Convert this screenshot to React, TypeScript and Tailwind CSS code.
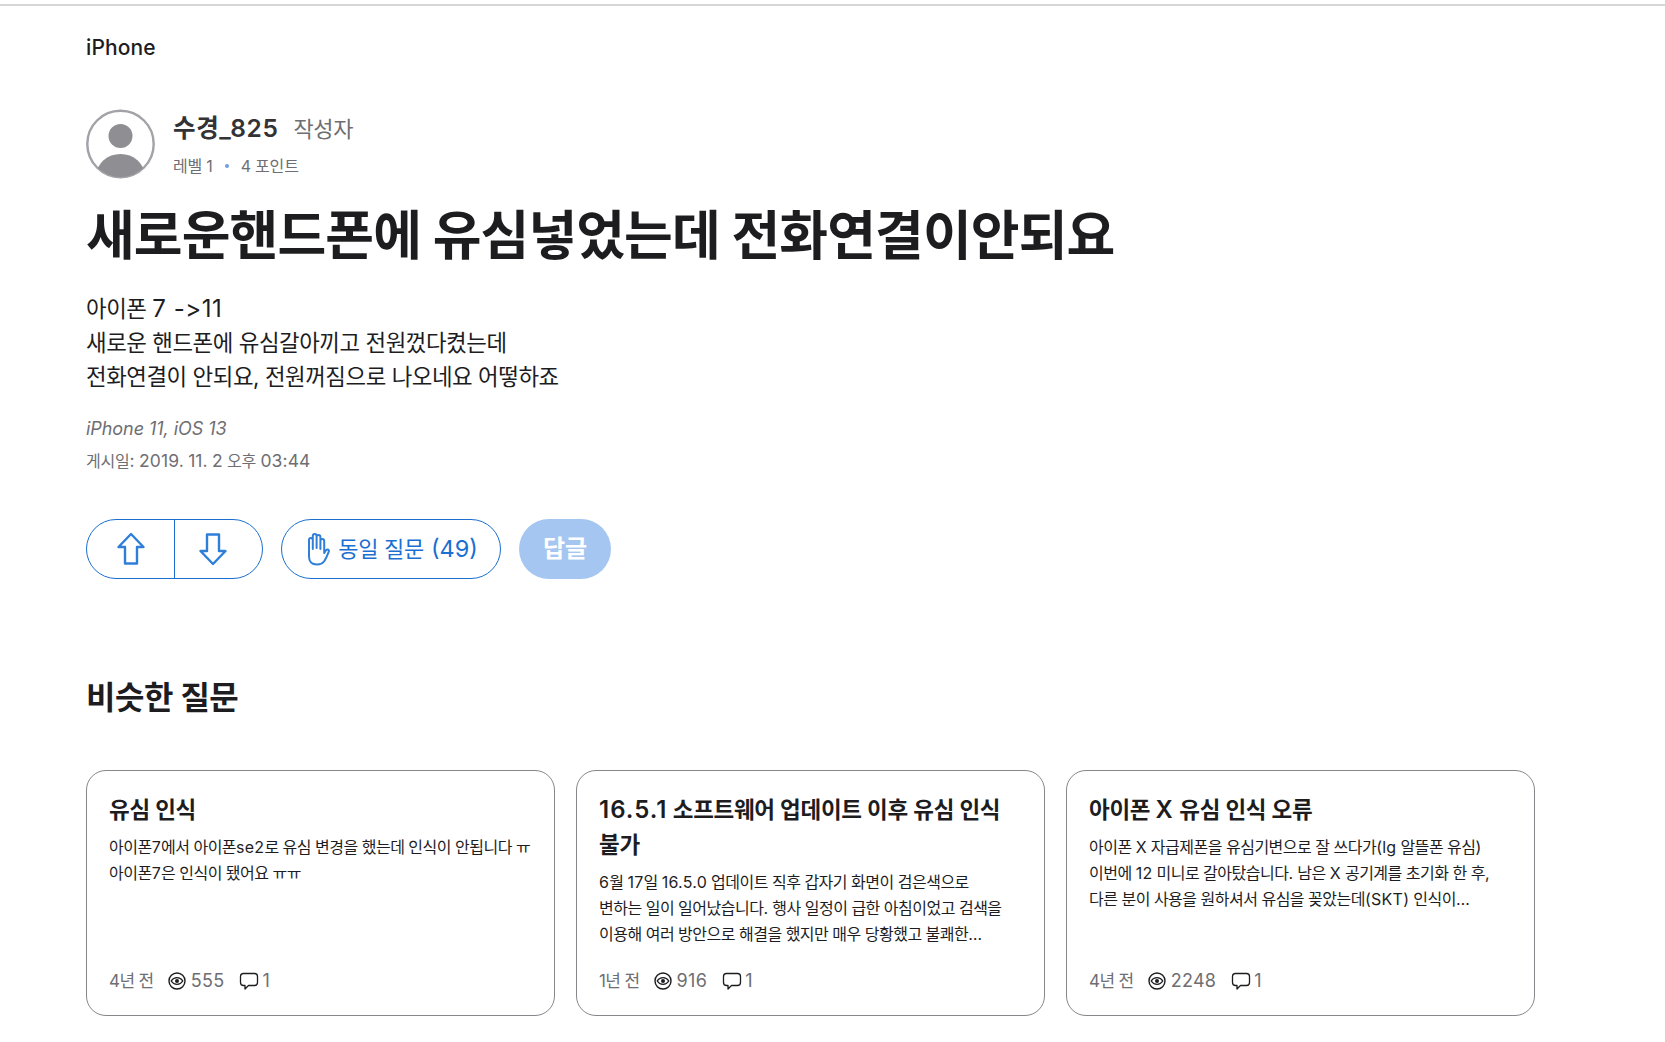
import type { ReactNode } from "react";

const F = "[font-family:Inter,'Noto_Sans_CJK_KR',sans-serif]";

function Mix({ text, latin }: { text: string; latin: string }): ReactNode {
  return text.split(/([0-9A-Za-z.\-:()>]+)/).map((part, i) =>
    i % 2 === 1 ? (
      <span key={i} className={latin}>{part}</span>
    ) : (
      <span key={i}>{part}</span>
    ),
  );
}

function Eye() {
  return (
    <svg width="18" height="18" viewBox="0 0 18 18" fill="none" stroke="#1d1d1f" className="shrink-0">
      <circle cx="9" cy="9" r="8" strokeWidth="1.4" />
      <path d="M3.200 9C4.600 6.800 6.600 5.700 9 5.700S13.400 6.800 14.800 9C13.400 11.200 11.400 12.300 9 12.300S4.600 11.200 3.200 9Z" strokeWidth="1.3" />
      <circle cx="9" cy="9" r="2" fill="#1d1d1f" stroke="none" />
    </svg>
  );
}

function Bubble() {
  return (
    <svg width="20" height="19" viewBox="0 0 20 19" fill="none" stroke="#1d1d1f" strokeWidth="1.3" className="shrink-0">
      <path d="M4.500 1.500H15.500C17.200 1.500 18.500 2.800 18.500 4.500V10.500C18.500 12.200 17.200 13.500 15.500 13.500H9.500L6 17V13.500H4.500C2.800 13.500 1.500 12.200 1.500 10.500V4.500C1.500 2.800 2.800 1.500 4.500 1.500Z" strokeLinejoin="round" />
    </svg>
  );
}

function Card({ title, lines, age, views }: { title: string[]; lines: string[]; age: string; views: string }) {
  return (
    <div className="flex h-[246px] w-[469px] shrink-0 flex-col rounded-[20px] border border-[#86868b] px-[22px] pb-[22px] pt-[21px]">
      <div className="text-[22.5px] font-semibold leading-[35px] tracking-[-0.3px] text-[#1d1d1f]">
        {title.map((t) => (
          <div key={t}><Mix text={t} latin="text-[24px] tracking-[1px]" /></div>
        ))}
      </div>
      <div className="mt-[7px] whitespace-nowrap text-[16px] leading-[26px] tracking-[-0.5px] text-[#1d1d1f]">
        {lines.map((t) => (
          <div key={t}><Mix text={t} latin="tracking-[0.25px]" /></div>
        ))}
      </div>
      <div className="mt-auto flex items-center text-[18px] leading-[24px] text-[#6e6e73]">
        <span className="text-[17px] tracking-[-0.6px]">{age}</span>
        <span className="ml-[14px]"><Eye /></span>
        <span className="ml-[5px] tracking-[0.3px]">{views}</span>
        <span className="ml-[15px]"><Bubble /></span>
        <span className="ml-[3px]">1</span>
      </div>
    </div>
  );
}

export default function App() {
  return (
    <div className={`${F} min-h-[1042px] bg-white text-[#1d1d1f]`}>
      <div className="h-[4px]" />
      <div className="h-[2px] bg-[#d6d6d6]" />
      <div className="px-[86px]">
        <div className="mt-[26px] text-[21px] font-medium leading-[32px] tracking-[0.1px]">iPhone</div>

        <div className="mt-[45px] flex items-center">
          <svg width="69" height="70" viewBox="0 0 69 70" className="shrink-0">
            <defs>
              <clipPath id="av"><circle cx="34.5" cy="35" r="33" /></clipPath>
            </defs>
            <circle cx="34.5" cy="35" r="33.2" fill="#fff" stroke="#a2a2a7" strokeWidth="2.4" />
            <circle cx="34.5" cy="27" r="12" fill="#8e8e93" />
            <ellipse cx="34.5" cy="66" rx="24" ry="21" fill="#8e8e93" clipPath="url(#av)" />
          </svg>
          <div className="ml-[18px]">
            <div className="flex items-baseline">
              <span className="text-[24.5px] font-semibold leading-[36px] tracking-[0.6px] text-[#333336]">수경_825</span>
              <span className="ml-[15px] text-[22px] leading-[36px] tracking-[-0.3px] text-[#6e6e73]">작성자</span>
            </div>
            <div className="mt-[7px] flex items-center text-[16px] leading-[24px] tracking-[-0.2px] text-[#6e6e73]">
              <span>레벨 1</span>
              <span className="mx-[12px] h-[4px] w-[4px] rounded-full bg-[#6f9fe0]" />
              <span>4 포인트</span>
            </div>
          </div>
        </div>

        <h1 className="mt-[19px] text-[53px] font-bold leading-[76px] tracking-[-0.9px] text-[#1d1d1f]">새로운핸드폰에 유심넣었는데 전화연결이안되요</h1>

        <div className="mt-[18px] text-[22.4px] leading-[34px] tracking-[-0.45px] text-[#1d1d1f]">
          <div>아이폰 <span className="text-[24px] tracking-[0.55px]">7 -&gt;11</span></div>
          <div>새로운 핸드폰에 유심갈아끼고 전원껐다켰는데</div>
          <div>전화연결이 안되요, 전원꺼짐으로 나오네요 어떻하죠</div>
        </div>

        <div className="mt-[19px] text-[18px] italic leading-[32px] tracking-[-0.05px] text-[#6e6e73]">iPhone 11, iOS 13</div>
        <div className="text-[16px] leading-[32px] tracking-[-0.2px] text-[#6e6e73]">
          <Mix text="게시일: 2019. 11. 2 오후 03:44" latin="text-[17.5px] tracking-[0.1px]" />
        </div>

        <div className="mt-[42px] flex items-center">
          <div className="flex h-[60px] w-[177px] rounded-full border border-[#1a6fd1]">
            <div className="flex w-[88px] items-center justify-center border-r border-[#1a6fd1]">
              <svg width="28" height="34" viewBox="0 0 28 34" fill="none" stroke="#2f7fd8" strokeWidth="2.4" strokeLinejoin="round">
                <path d="M14 2L26.500 15H20V31.500H8V15H1.500L14 2Z" />
              </svg>
            </div>
            <div className="flex flex-1 items-center justify-center pr-[12px]">
              <svg width="28" height="34" viewBox="0 0 28 34" fill="none" stroke="#2f7fd8" strokeWidth="2.4" strokeLinejoin="round">
                <path d="M14 32L26.500 19H20V2.500H8V19H1.500L14 32Z" />
              </svg>
            </div>
          </div>
          <div className="ml-[18px] flex h-[60px] w-[220px] items-center justify-center rounded-full border border-[#1a6fd1] text-[22px] tracking-[-0.3px] text-[#1a6fd1]">
            <svg width="26" height="34" viewBox="0 0 26 34" fill="none" stroke="#2f7fd8" strokeWidth="2" strokeLinecap="round" strokeLinejoin="round" className="mr-[8px]">
              <path d="M5 19V8a1.900 1.900 0 0 1 3.800 0v9M8.800 16V4a1.900 1.900 0 0 1 3.800 0v12M12.600 16V5a1.900 1.900 0 0 1 3.800 0v12M16.400 17V9a1.900 1.900 0 0 1 3.800 0v12c1-2 2-3.500 3.300-3.500 1.200 0 1.700 1 1.200 2.300C23 24 22 27 20 29.500 18.500 31.500 16 32.500 13 32.500 8 32.500 5 29.500 5 24.500V19" />
            </svg>
            <span className="mr-[7px]">동일 질문</span>
            <span className="text-[23.5px] tracking-[0px]">(49)</span>
          </div>
          <div className="ml-[18px] flex h-[60px] w-[92px] items-center justify-center rounded-full bg-[#a5c6f1] text-[24px] font-semibold text-white">답글</div>
        </div>

        <h2 className="mt-[96px] text-[32px] font-semibold leading-[46px] tracking-[-0.5px] text-[#1d1d1f]">비슷한 질문</h2>

        <div className="mt-[49px] flex gap-[21px]">
          <Card
            title={["유심 인식"]}
            lines={["아이폰7에서 아이폰se2로 유심 변경을 했는데 인식이 안됩니다 ㅠ", "아이폰7은 인식이 됐어요 ㅠㅠ"]}
            age="4년 전"
            views="555"
          />
          <Card
            title={["16.5.1 소프트웨어 업데이트 이후 유심 인식", "불가"]}
            lines={["6월 17일 16.5.0 업데이트 직후 갑자기 화면이 검은색으로", "변하는 일이 일어났습니다. 행사 일정이 급한 아침이었고 검색을", "이용해 여러 방안으로 해결을 했지만 매우 당황했고 불쾌한…"]}
            age="1년 전"
            views="916"
          />
          <Card
            title={["아이폰 X 유심 인식 오류"]}
            lines={["아이폰 X 자급제폰을 유심기변으로 잘 쓰다가(lg 알뜰폰 유심)", "이번에 12 미니로 갈아탔습니다. 남은 X 공기계를 초기화 한 후,", "다른 분이 사용을 원하셔서 유심을 꽂았는데(SKT) 인식이…"]}
            age="4년 전"
            views="2248"
          />
        </div>
      </div>
    </div>
  );
}
